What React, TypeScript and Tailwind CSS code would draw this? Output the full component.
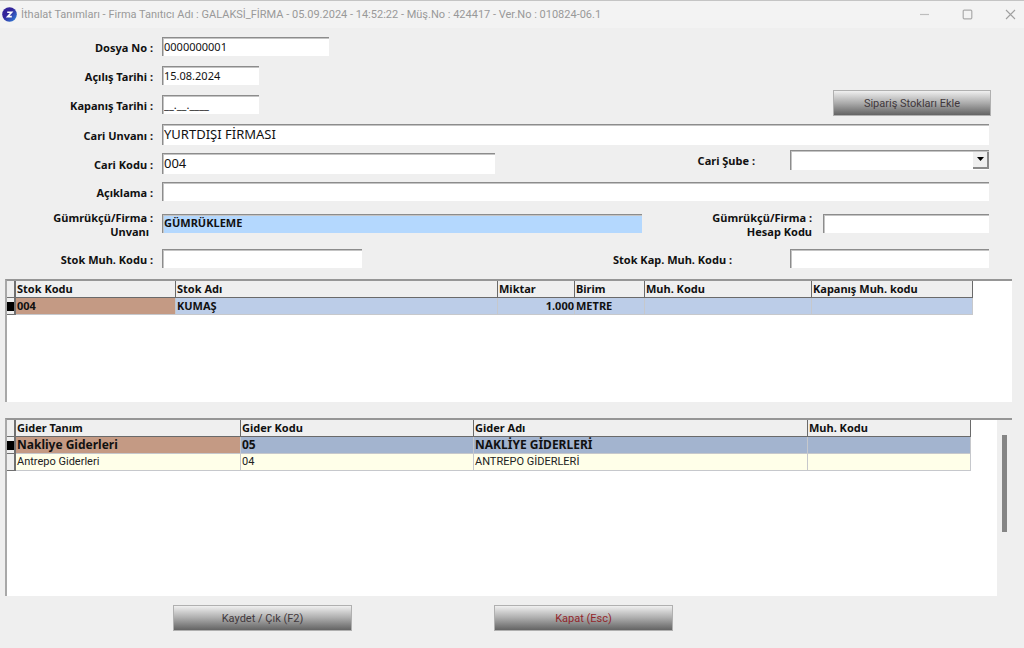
import { useState } from "react";
import clsx from "clsx";

interface Column {
  title: string;
  width: string;
  align?: "right";
}

interface DataGridProps {
  label: string;
  width: string;
  columns: Column[];
  rows: string[][];
  activeClass: string;
}

const stockColumns: Column[] = [
  { title: "Stok Kodu", width: "w-[160px]" },
  { title: "Stok Adı", width: "w-[322px]" },
  { title: "Miktar", width: "w-[77px]", align: "right" },
  { title: "Birim", width: "w-[70px]" },
  { title: "Muh. Kodu", width: "w-[167px]" },
  { title: "Kapanış Muh. kodu", width: "w-[161px]" },
];

const stockRows = [["004", "KUMAŞ", "1.000", "METRE", "", ""]];

const expenseColumns: Column[] = [
  { title: "Gider Tanım", width: "w-[225px]" },
  { title: "Gider Kodu", width: "w-[233px]" },
  { title: "Gider Adı", width: "w-[334px]" },
  { title: "Muh. Kodu", width: "w-[163px]" },
];

const expenseRows = [
  ["Nakliye Giderleri", "05", "NAKLİYE GİDERLERİ", ""],
  ["Antrepo Giderleri", "04", "ANTREPO GİDERLERİ", ""],
];

const fieldBase =
  "block min-w-0 border-t border-l border-[#8c8c8c] pl-px pb-0.5 text-[#111] shadow-[inset_1px_1px_0_#c4c4c4] outline-none";

const fieldClass = clsx(fieldBase, "bg-white");

const labelClass = "w-[153px] shrink-0 pt-1 text-right font-bold";

const buttonClass =
  "h-[26px] border border-[#b0b0b0] bg-linear-to-b from-[#f0f0f0] via-[#acacac] to-[#646464] pt-0.5 text-center font-[Roboto,'Noto_Sans',sans-serif]";

function TitleBar() {
  return (
    <header className="flex h-7 items-center border-t border-[#c4c4c4] bg-[#f3f3f3] pl-0.5 text-[#999]">
      <svg width="15" height="15" viewBox="0 0 15 15" aria-hidden="true">
        <defs>
          <linearGradient id="logo" x1="0" y1="0" x2="1" y2="1">
            <stop offset="0.4" stopColor="#33249a" />
            <stop offset="1" stopColor="#2f8be0" />
          </linearGradient>
        </defs>
        <circle cx="7.5" cy="7.5" r="7.3" fill="url(#logo)" />
        <path d="M5.2 5.2h4.4L5.6 9.6h4.2" fill="none" stroke="#fff" strokeWidth="1.6" />
      </svg>
      <h1 className="ml-1 pt-0.5 whitespace-nowrap font-[Roboto,'Noto_Sans',sans-serif] text-[11px]">
        İthalat Tanımları - Firma Tanıtıcı Adı : GALAKSİ_FİRMA - 05.09.2024 - 14:52:22 - Müş.No : 424417 - Ver.No : 010824-06.1
      </h1>
      <div className="ml-auto flex items-center gap-8 pr-2">
        <button type="button" aria-label="Simge durumuna küçült">
          <svg width="11" height="11" viewBox="0 0 11 11" fill="none" stroke="#bdbdbd" strokeWidth="1.2">
            <path d="M1 5.5h9" />
          </svg>
        </button>
        <button type="button" aria-label="Ekranı kapla">
          <svg width="11" height="11" viewBox="0 0 11 11" fill="none" stroke="#ababab" strokeWidth="1.2">
            <rect x="1.2" y="1.2" width="8.6" height="8.6" rx="1" />
          </svg>
        </button>
        <button type="button" aria-label="Pencereyi kapat">
          <svg width="11" height="11" viewBox="0 0 11 11" fill="none" stroke="#a0a0a0" strokeWidth="1.1">
            <path d="M1 1l9 9M10 1l-9 9" />
          </svg>
        </button>
      </div>
    </header>
  );
}

function DataGrid({ label, width, columns, rows, activeClass }: DataGridProps) {
  const [active, setActive] = useState(0);

  return (
    <table aria-label={label} className={clsx("table-fixed border-separate border-spacing-0 leading-4", width)}>
      <thead>
        <tr className="h-[17px] bg-[#efefef] text-left">
          <td className="w-[9px] border-r-2 border-b border-[#707070] p-0" />
          {columns.map((col) => (
            <th key={col.title} className={clsx("border-r border-b border-[#6a6a6a] p-0 pl-px font-bold", col.width)}>
              {col.title}
            </th>
          ))}
        </tr>
      </thead>
      <tbody>
        {rows.map((row, r) => (
          <tr
            key={r}
            onClick={() => setActive(r)}
            className={clsx(
              "h-[17px]",
              r === active
                ? clsx("font-bold", activeClass)
                : "bg-[#ffffe9] font-[Roboto,'Noto_Sans',sans-serif] text-[#222]"
            )}
          >
            <td className="border-r-2 border-b border-[#707070] bg-[#efefef] p-0">
              {r === active && <div className="h-[9px] w-[7px] bg-black" />}
            </td>
            {row.map((cell, c) => (
              <td
                key={c}
                className={clsx(
                  "overflow-hidden whitespace-nowrap border-r border-b border-[#c6c8cc] p-0 pl-px",
                  columns[c].align === "right" && "text-right",
                  r === active && c === 0 && "bg-[#c49a84]"
                )}
              >
                {cell}
              </td>
            ))}
          </tr>
        ))}
      </tbody>
    </table>
  );
}

export default function App() {
  return (
    <div className="flex min-h-screen flex-col bg-[#efefef] font-['Noto_Sans','DejaVu_Sans',sans-serif] text-[11px] text-[#111]">
      <TitleBar />

      <form className="flex grow flex-col" onSubmit={(e) => e.preventDefault()}>
        <div className="flex flex-col pt-1 pr-[35px]">
          <div className="flex h-[29px] items-center gap-[9px]">
            <label htmlFor="dosyaNo" className={labelClass}>Dosya No :</label>
            <input id="dosyaNo" defaultValue="0000000001" className={clsx(fieldClass, "h-[19px] w-[167px]")} />
          </div>

          <div className="flex h-[29px] items-center gap-[9px]">
            <label htmlFor="acilis" className={labelClass}>Açılış Tarihi :</label>
            <input id="acilis" defaultValue="15.08.2024" className={clsx(fieldClass, "h-[19px] w-[97px]")} />
          </div>

          <div className="flex h-[29px] items-center gap-[9px]">
            <label htmlFor="kapanis" className={labelClass}>Kapanış Tarihi :</label>
            <input id="kapanis" defaultValue="__.__.____" className={clsx(fieldClass, "h-[19px] w-[97px]")} />
            <button type="button" className={clsx(buttonClass, "-mr-0.5 ml-auto w-[158px] self-start text-[#41383c]")}>
              Sipariş Stokları Ekle
            </button>
          </div>

          <div className="flex h-[30px] items-center gap-[9px]">
            <label htmlFor="unvan" className={labelClass}>Cari Unvanı :</label>
            <input id="unvan" defaultValue="YURTDIŞI FİRMASI" className={clsx(fieldClass, "h-[21px] flex-1 text-[13px]")} />
          </div>

          <div className="flex h-[29px] items-center gap-[9px]">
            <label htmlFor="kod" className={labelClass}>Cari Kodu :</label>
            <input id="kod" defaultValue="004" className={clsx(fieldClass, "h-[21px] w-[333px] text-[13px]")} />
            <div className="ml-auto flex items-center gap-[35px]">
              <label htmlFor="sube" className="-mt-1 font-bold">Cari Şube :</label>
              <div className="relative -mt-2 w-[199px]">
                <select id="sube" className={clsx(fieldClass, "h-5 w-full appearance-none")}>
                  <option value=""></option>
                </select>
                <span className="pointer-events-none absolute top-0.5 right-0 flex h-[17px] w-4 items-center justify-center border-r-2 border-b-2 border-[#8a8a8a] bg-[#efefef]">
                  <svg width="7" height="4" viewBox="0 0 7 4">
                    <path d="M0 0h7L3.5 4z" fill="#000" />
                  </svg>
                </span>
              </div>
            </div>
          </div>

          <div className="flex h-[27px] items-center gap-[9px]">
            <label htmlFor="aciklama" className={labelClass}>Açıklama :</label>
            <input id="aciklama" className={clsx(fieldClass, "h-[19px] flex-1")} />
          </div>

          <div className="flex h-9 items-center gap-[9px]">
            <label htmlFor="gumrukcu" className={clsx(labelClass, "leading-[14px]")}>
              Gümrükçü/Firma :
              <span className="block pr-1">Unvanı</span>
            </label>
            <input
              id="gumrukcu"
              defaultValue="GÜMRÜKLEME"
              className={clsx(fieldBase, "h-[19px] w-[480px] bg-[#b4d8fe] font-bold")}
            />
            <div className="ml-auto flex items-center gap-[11px]">
              <label htmlFor="hesapKodu" className="pt-1 text-right leading-[14px] font-bold">
                Gümrükçü/Firma :
                <span className="block">Hesap Kodu</span>
              </label>
              <input id="hesapKodu" className={clsx(fieldClass, "h-[19px] w-[166px]")} />
            </div>
          </div>

          <div className="flex h-[34px] items-center gap-[9px]">
            <label htmlFor="stokMuh" className={labelClass}>Stok Muh. Kodu :</label>
            <input id="stokMuh" className={clsx(fieldClass, "h-[19px] w-[200px]")} />
            <div className="ml-auto flex items-center gap-[58px]">
              <label htmlFor="stokKap" className="pt-1 font-bold">Stok Kap. Muh. Kodu :</label>
              <input id="stokKap" className={clsx(fieldClass, "h-[19px] w-[199px]")} />
            </div>
          </div>
        </div>

        <section className="mt-1 mr-3 ml-[5px] min-h-[123px] border-t-2 border-l-2 border-t-[#969696] border-l-[#a8a8a8] bg-white">
          <DataGrid
            label="Stoklar"
            width="w-[966px]"
            columns={stockColumns}
            rows={stockRows}
            activeClass="bg-[#bccde8]"
          />
        </section>

        <section className="mt-4 mr-3 ml-[5px] flex min-h-[178px] grow justify-between border-t-2 border-l-2 border-t-[#969696] border-l-[#a8a8a8] bg-white">
          <div>
            <DataGrid
              label="Giderler"
              width="w-[964px]"
              columns={expenseColumns}
              rows={expenseRows}
              activeClass="bg-[#a3b4cf] text-[12px]"
            />
          </div>
          <div className="flex w-[15px] justify-center bg-[#efefef] pt-[15px]">
            <div className="h-[97px] w-[5px] bg-[#858585]" />
          </div>
        </section>

        <footer className="flex gap-[142px] pt-[9px] pb-[17px] pl-[173px]">
          <button type="submit" className={clsx(buttonClass, "w-[179px] text-[#41383c]")}>
            Kaydet / Çık (F2)
          </button>
          <button type="button" className={clsx(buttonClass, "w-[179px] text-[#92262c]")}>
            Kapat (Esc)
          </button>
        </footer>
      </form>
    </div>
  );
}
